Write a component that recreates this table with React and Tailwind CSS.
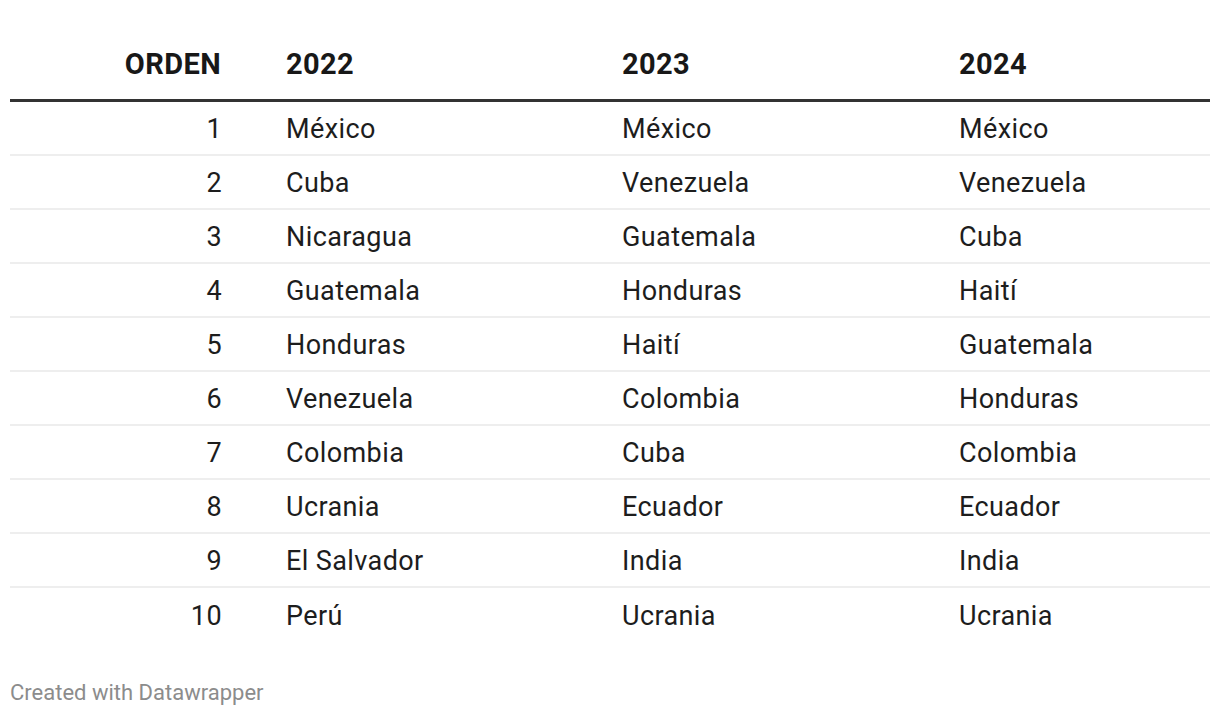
const rows = [
  ["1", "México", "México", "México"],
  ["2", "Cuba", "Venezuela", "Venezuela"],
  ["3", "Nicaragua", "Guatemala", "Cuba"],
  ["4", "Guatemala", "Honduras", "Haití"],
  ["5", "Honduras", "Haití", "Guatemala"],
  ["6", "Venezuela", "Colombia", "Honduras"],
  ["7", "Colombia", "Cuba", "Colombia"],
  ["8", "Ucrania", "Ecuador", "Ecuador"],
  ["9", "El Salvador", "India", "India"],
  ["10", "Perú", "Ucrania", "Ucrania"],
];

const App = () => {
  return (
    <div className="w-[1220px] h-[716px] bg-white px-[10px] pt-[30px] font-['Roboto',sans-serif] text-[#1d1d1d]">
      <div className="grid grid-cols-[242px_336px_337px_1fr] h-[72px] items-center border-b-[3px] border-[#333333] text-[29px] tracking-[0.4px] font-bold text-[#181818]">
        <div className="text-right pr-[31px]">ORDEN</div>
        <div className="pl-[34px]">2022</div>
        <div className="pl-[34px]">2023</div>
        <div className="pl-[34px]">2024</div>
      </div>
      {rows.map((r, i) => (
        <div
          key={i}
          className={
            i < rows.length - 1
              ? "grid grid-cols-[242px_336px_337px_1fr] h-[54px] pt-[2px] items-center border-b-2 border-[#eeeeee] text-[27px] tracking-[0.4px]"
              : "grid grid-cols-[242px_336px_337px_1fr] h-[54px] pt-[2px] items-center text-[27px] tracking-[0.4px]"
          }
        >
          <div className="text-right pr-[30px]">{r[0]}</div>
          <div className="pl-[34px]">{r[1]}</div>
          <div className="pl-[34px]">{r[2]}</div>
          <div className="pl-[34px]">{r[3]}</div>
        </div>
      ))}
      <div className="mt-[34px] text-[22px] text-[#8c8c8c]">Created with Datawrapper</div>
    </div>
  );
};

export default App;
